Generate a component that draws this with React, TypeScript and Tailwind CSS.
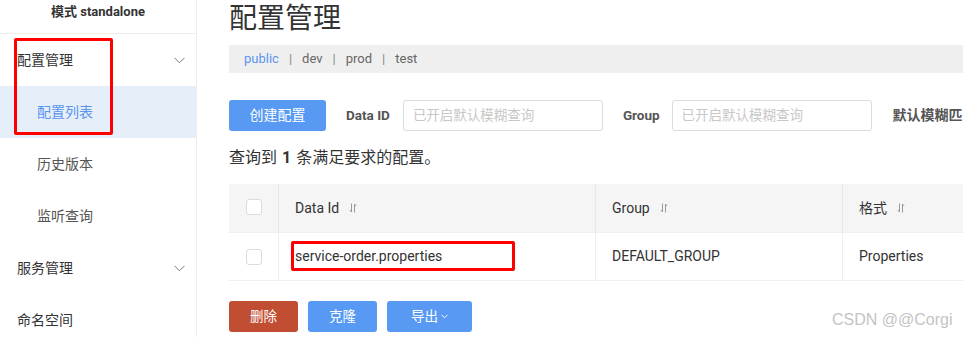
import React from "react";

const font = { fontFamily: 'Roboto, "Noto Sans CJK SC", sans-serif' };

function Chevron() {
  return (
    <svg width="11" height="7" viewBox="0 0 11 7" fill="none">
      <path d="M0.5 0.8 L5.5 5.8 L10.5 0.8" stroke="#777" strokeWidth="1" />
    </svg>
  );
}

function SortIcon() {
  return (
    <svg width="8" height="10" viewBox="0 0 8 10" fill="none" className="ml-[10px]">
      <path d="M2.5 0.5 V9 M0.8 7 L2.5 9 M5.5 9.5 V1 M5.5 1 L7.2 3" stroke="#999" strokeWidth="1" />
    </svg>
  );
}

function Checkbox() {
  return <div className="w-[16px] h-[16px] rounded-[3px] border border-[#dcdcdc] bg-white" />;
}

export default function App() {
  return (
    <div className="relative w-[963px] h-[337px] overflow-hidden bg-white flex text-[#333]" style={font}>
      {/* Sidebar */}
      <div className="w-[197px] shrink-0 border-r border-[#eeeeee] flex flex-col">
        <div className="h-[34px] shrink-0 border-b border-[#eeeeee] flex items-center justify-center text-[13px] font-bold text-[#333] pb-[9px]">
          模式 standalone
        </div>
        <div className="h-[52px] shrink-0 flex items-center justify-between pl-[17px] pr-[11px] text-[14px] text-[#333]">
          <span>配置管理</span>
          <Chevron />
        </div>
        <div className="h-[52px] shrink-0 flex items-center pl-[37px] text-[14px] text-[#5b95f0] bg-[#e6eff9]">配置列表</div>
        <div className="h-[52px] shrink-0 flex items-center pl-[37px] text-[14px] text-[#555]">历史版本</div>
        <div className="h-[52px] shrink-0 flex items-center pl-[37px] text-[14px] text-[#555]">监听查询</div>
        <div className="h-[52px] shrink-0 flex items-center justify-between pl-[17px] pr-[11px] text-[14px] text-[#333]">
          <span>服务管理</span>
          <Chevron />
        </div>
        <div className="h-[52px] shrink-0 flex items-center pl-[17px] text-[14px] text-[#333]">命名空间</div>
      </div>

      {/* Main */}
      <div className="flex-1 min-w-0 pl-[32px] flex flex-col">
        <div className="h-[45px] shrink-0 flex items-center text-[28px] leading-none text-[#333] pb-[7px]">配置管理</div>
        <div className="h-[28px] shrink-0 bg-[#efefef] flex items-center pl-[15px] text-[13px] text-[#666] whitespace-nowrap">
          <span className="text-[#5b95f0]">public</span>
          <span className="mx-[10px] text-[#888]">|</span>
          <span>dev</span>
          <span className="mx-[10px] text-[#888]">|</span>
          <span>prod</span>
          <span className="mx-[10px] text-[#888]">|</span>
          <span>test</span>
        </div>

        <div className="mt-[27px] h-[31px] shrink-0 flex items-center whitespace-nowrap">
          <button className="w-[97px] h-[31px] rounded-[3px] bg-[#5799f3] text-white text-[14px] shrink-0">创建配置</button>
          <span className="ml-[20px] text-[13.5px] font-bold text-[#555]">Data ID</span>
          <div className="ml-[13px] w-[200px] h-[31px] rounded-[3px] border border-[#dcdcdc] flex items-center pl-[9px] text-[13.5px] text-[#c8c8c8] shrink-0">
            已开启默认模糊查询
          </div>
          <span className="ml-[20px] text-[13.5px] font-bold text-[#555]">Group</span>
          <div className="ml-[12px] w-[200px] h-[31px] rounded-[3px] border border-[#dcdcdc] flex items-center pl-[9px] text-[13.5px] text-[#c8c8c8] shrink-0">
            已开启默认模糊查询
          </div>
          <span className="ml-[21px] text-[14px] font-bold text-[#555]">默认模糊匹</span>
        </div>

        <div className="mt-[17px] h-[20px] shrink-0 flex items-center text-[16px] text-[#333] whitespace-nowrap">
          查询到 <span className="font-bold mx-[5px]">1</span> 条满足要求的配置。
        </div>

        <div className="mt-[16px] w-[900px] shrink-0 border-b border-[#eeeeee]">
          <div className="h-[49px] bg-[#f5f5f5] flex text-[14px] text-[#333] border-b border-[#eeeeee]">
            <div className="w-[50px] flex items-center justify-center border-r border-[#e8e8e8] pb-[2px]">
              <Checkbox />
            </div>
            <div className="w-[317px] flex items-center pl-[16px] border-r border-[#e8e8e8]">
              Data Id <SortIcon />
            </div>
            <div className="w-[247px] flex items-center pl-[16px] border-r border-[#e8e8e8]">
              Group <SortIcon />
            </div>
            <div className="flex-1 flex items-center pl-[16px]">
              格式 <SortIcon />
            </div>
          </div>
          <div className="h-[47px] flex text-[14px] text-[#333] bg-white">
            <div className="w-[50px] flex items-center justify-center border-r border-[#eeeeee]">
              <Checkbox />
            </div>
            <div className="w-[317px] flex items-center pl-[16px] border-r border-[#eeeeee]">service-order.properties</div>
            <div className="w-[247px] flex items-center pl-[16px] border-r border-[#eeeeee]">DEFAULT_GROUP</div>
            <div className="flex-1 flex items-center pl-[16px]">Properties</div>
          </div>
        </div>

        <div className="mt-[20px] flex gap-[10px] whitespace-nowrap shrink-0">
          <button className="w-[69px] h-[31px] rounded-[3px] bg-[#c14e33] text-white text-[13.5px]">删除</button>
          <button className="w-[69px] h-[31px] rounded-[3px] bg-[#5799f3] text-white text-[13.5px]">克隆</button>
          <button className="w-[85px] h-[31px] rounded-[3px] bg-[#5799f3] text-white text-[13.5px] flex items-center justify-center gap-[3px]">
            导出
            <svg width="7" height="5" viewBox="0 0 7 5" fill="none">
              <path d="M0.5 0.8 L3.5 3.8 L6.5 0.8" stroke="white" strokeWidth="1" />
            </svg>
          </button>
        </div>
      </div>

      {/* annotations */}
      <div className="absolute left-[14px] top-[38px] w-[99px] h-[97px] border-[3px] border-[#f00] rounded-[2px]" />
      <div className="absolute left-[291px] top-[241px] w-[224px] h-[30px] border-[3px] border-[#f00] rounded-[2px]" />
      <div className="absolute left-[832px] top-[308px] text-[16px] text-[#c4c4c4] whitespace-nowrap" style={{ fontFamily: '"Liberation Sans", Arial, sans-serif' }}>
        CSDN @@Corgi
      </div>
    </div>
  );
}
